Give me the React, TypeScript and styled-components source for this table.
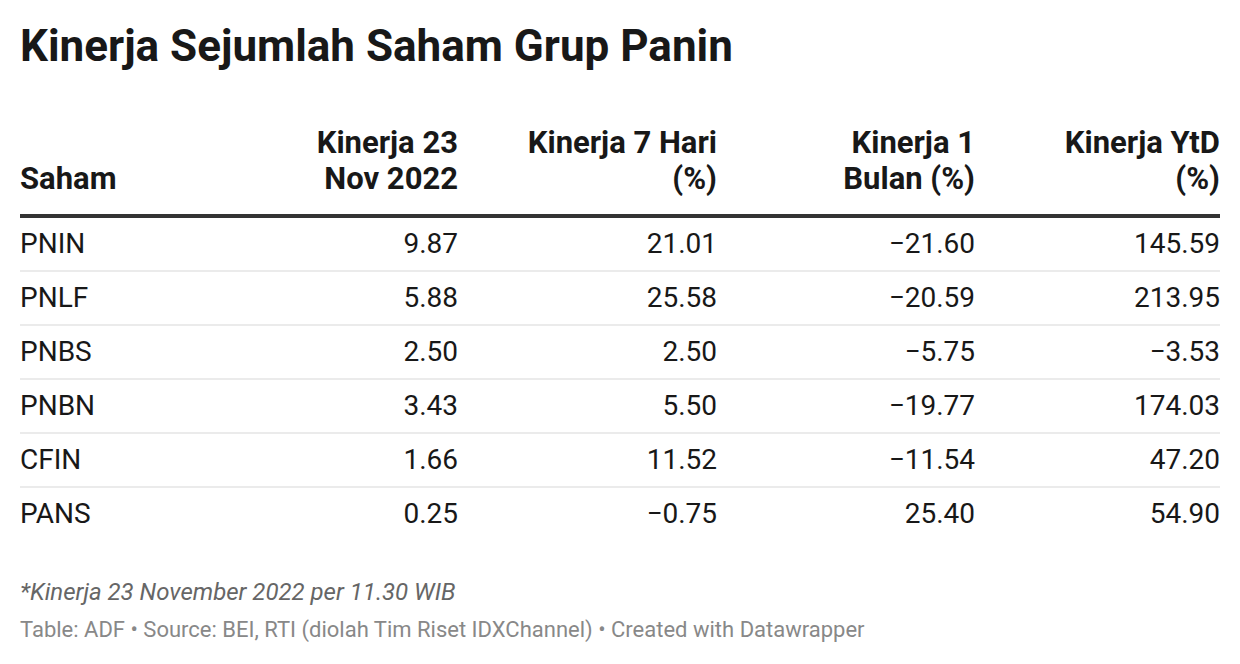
import React from "react";
import styled, { createGlobalStyle } from "styled-components";

const GlobalStyle = createGlobalStyle`
  html, body {
    margin: 0;
    padding: 0;
    background: #fff;
  }
  body {
    font-family: Roboto, "Liberation Sans", Arial, sans-serif;
    color: #181818;
  }
`;

const rows = [
  { saham: "PNIN", d: "9.87", w: "21.01", m: "\u221221.60", ytd: "145.59" },
  { saham: "PNLF", d: "5.88", w: "25.58", m: "\u221220.59", ytd: "213.95" },
  { saham: "PNBS", d: "2.50", w: "2.50", m: "\u22125.75", ytd: "\u22123.53" },
  { saham: "PNBN", d: "3.43", w: "5.50", m: "\u221219.77", ytd: "174.03" },
  { saham: "CFIN", d: "1.66", w: "11.52", m: "\u221211.54", ytd: "47.20" },
  { saham: "PANS", d: "0.25", w: "\u22120.75", m: "25.40", ytd: "54.90" },
];

// column widths, left to right
const colWidths = [180, 258, 259, 258, 245];

export default function App() {
  return (
    <>
      <GlobalStyle />
      <Chart>
        <Title>Kinerja Sejumlah Saham Grup Panin</Title>
        <Table>
          <colgroup>
            {colWidths.map((w, i) => (
              <Col key={i} $w={w} />
            ))}
          </colgroup>
          <thead>
            <tr>
              <Th $align="left">Saham</Th>
              <Th $align="right">Kinerja 23<br />Nov 2022</Th>
              <Th $align="right">Kinerja 7 Hari<br />(%)</Th>
              <Th $align="right">Kinerja 1<br />Bulan (%)</Th>
              <Th $align="right">Kinerja YtD<br />(%)</Th>
            </tr>
          </thead>
          <tbody>
            {rows.map((r, i) => (
              <Row key={r.saham} $last={i === rows.length - 1}>
                <Td $align="left">{r.saham}</Td>
                <Td $align="right">{r.d}</Td>
                <Td $align="right">{r.w}</Td>
                <Td $align="right">{r.m}</Td>
                <Td $align="right">{r.ytd}</Td>
              </Row>
            ))}
          </tbody>
        </Table>
        <Footer>
          <Note>*Kinerja 23 November 2022 per 11.30 WIB</Note>
          <Byline>
            Table: ADF • Source: BEI, RTI (diolah Tim Riset IDXChannel) • Created with Datawrapper
          </Byline>
        </Footer>
      </Chart>
    </>
  );
}

const Chart = styled.div`
  padding: 20px 20px 0 20px;
  width: 1200px;
`;

const Title = styled.h1`
  margin: 0;
  font-size: 44px;
  font-weight: 700;
  line-height: 52px;
`;

const Table = styled.table`
  width: 1200px;
  table-layout: fixed;
  border-collapse: collapse;
  margin-top: 53px;
`;

const Col = styled.col<{ $w: number }>`
  width: ${(p) => p.$w}px;
`;

const Th = styled.th<{ $align: "left" | "right" }>`
  text-align: ${(p) => p.$align};
  vertical-align: bottom;
  font-size: 31px;
  font-weight: 700;
  line-height: 36px;
  padding: 0 0 17px 0;
  border-bottom: 4px solid #333;
`;

const Row = styled.tr<{ $last: boolean }>`
  border-bottom: ${(p) => (p.$last ? "none" : "2px solid #ebebeb")};
`;

const Td = styled.td<{ $align: "left" | "right" }>`
  text-align: ${(p) => p.$align};
  font-size: 28px;
  font-weight: 400;
  height: 52px;
  padding: 0;
  line-height: 52px;
  white-space: nowrap;
`;

const Footer = styled.div`
  margin-top: 34px;
`;

const Note = styled.div`
  font-size: 24px;
  font-style: italic;
  color: #666;
  line-height: 36px;
`;

const Byline = styled.div`
  margin-top: 2px;
  font-size: 22px;
  color: #888;
  line-height: 36px;
`;
